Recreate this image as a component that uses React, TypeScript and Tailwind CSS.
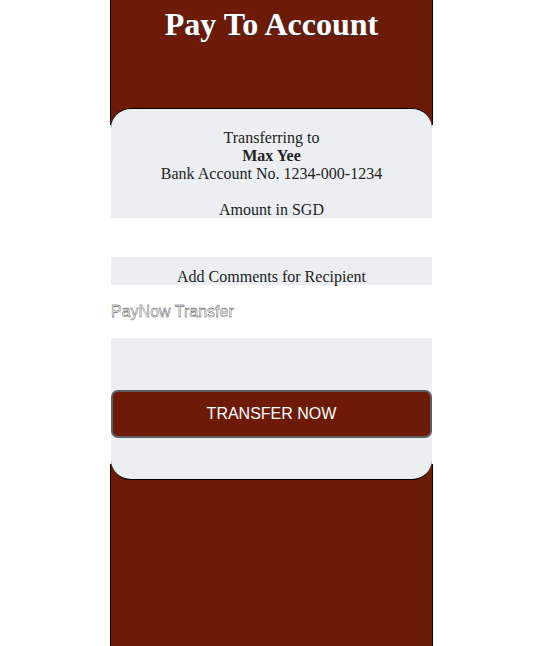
export default function App() {
  return (
    <div className="min-h-[646px] bg-white font-['Liberation_Serif',serif]">
      <div className="ml-[110px] w-[323px] flex flex-col">
        <div className="h-[125px] bg-[#6d1a07] border-x border-black">
          <h1 className="pt-[4px] text-center text-[32px] font-bold leading-[40px] text-white [text-shadow:1px_1px_1px_#333]">
            Pay To Account
          </h1>
        </div>

        <div className="relative z-10 -mt-[17px] mx-px rounded-[20px] border-y border-black bg-[#eceff1] overflow-hidden">
          <div className="h-[109px] overflow-hidden pt-[20px] text-center text-[16px] leading-[18px] text-[#222]">
            <p>Transferring to</p>
            <p className="font-bold">Max Yee</p>
            <p>Bank Account No. 1234-000-1234</p>
            <p>&nbsp;</p>
            <p>Amount in SGD</p>
          </div>
          <input className="block h-[39px] w-full bg-white outline-none" />
          <p className="h-[28px] pt-[11px] text-center text-[16px] leading-[17px] text-[#222]">
            Add Comments for Recipient
          </p>
          <input
            defaultValue="PayNow Transfer"
            className="block h-[53px] w-full bg-white font-['Liberation_Sans',sans-serif] text-[16px] text-white outline-none [-webkit-text-stroke:0.35px_#222]"
          />
          <div className="pt-[52px] pb-[41px]">
            <button className="h-[48px] w-full rounded-[7px] border-2 border-[#5f5f5f] bg-[#6d1a07] font-['Liberation_Sans',sans-serif] text-[16px] text-white">
              TRANSFER NOW
            </button>
          </div>
        </div>

        <div className="-mt-[16px] h-[183px] bg-[#6d1a07] border-x border-black" />
      </div>
    </div>
  );
}
